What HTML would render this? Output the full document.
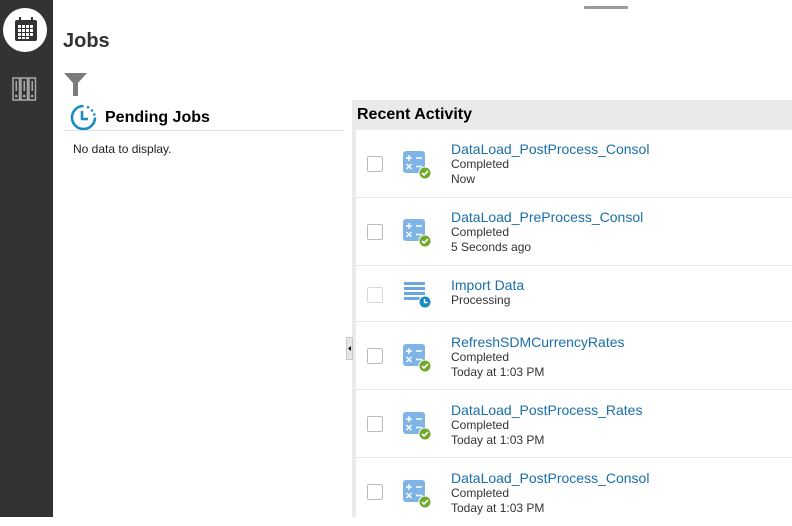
<!DOCTYPE html>
<html><head><meta charset="utf-8"><style>
*{margin:0;padding:0;box-sizing:border-box}
body{width:792px;height:517px;overflow:hidden;background:#fff;font-family:"Liberation Sans",sans-serif;position:relative}
.side{position:absolute;left:0;top:0;width:53px;height:517px;background:#333}
.circ{position:absolute;left:3px;top:8px;width:44px;height:44px;border-radius:50%;background:#fff}
.abs{position:absolute}
h1{position:absolute;left:63px;top:30px;font-size:20px;font-weight:bold;color:#333}
.pj{position:absolute;left:105px;top:109px;font-size:16px;font-weight:bold;color:#000}
.pline{position:absolute;left:63px;top:130px;width:281px;height:1px;background:#dde1e4}
.nd{position:absolute;left:73px;top:142px;font-size:12px;color:#222}
.panel{position:absolute;left:352px;top:100px;width:440px;height:417px;background:#e8eaeb}
.ph{position:absolute;left:357px;top:106px;font-size:16px;font-weight:bold;color:#000}
.list{position:absolute;left:356px;top:130px;width:436px;height:387px;background:#fff}
.row{position:absolute;left:0;width:436px;border-bottom:1px solid #e5e7e9}
.cb{position:absolute;left:11px;width:16px;height:16px;border:1px solid #b8bcc0;border-radius:2px;background:#fff}
.t{position:absolute;left:95px;font-size:14px;color:#1a6fa8}
.s{position:absolute;left:95px;font-size:12px;color:#333;line-height:15px}
.ic{position:absolute;left:47px}
.handle{position:absolute;left:346px;top:337px;width:7px;height:23px;background:#e6e6e6;border:1px solid #c8c8c8}
</style></head><body>
<div class="side"></div>
<div class="circ"></div>
<svg class="abs" style="left:14px;top:17px" width="24" height="25" viewBox="0 0 24 25">
<rect x="1" y="3" width="22" height="21" rx="2" fill="#333"/>
<rect x="5" y="0" width="2" height="5" fill="#333"/><rect x="17" y="0" width="2" height="5" fill="#333"/>
<g fill="#fff">
<rect x="4" y="8" width="3" height="3"/><rect x="8" y="8" width="3" height="3"/><rect x="12" y="8" width="3" height="3"/><rect x="16" y="8" width="3" height="3"/>
<rect x="4" y="12" width="3" height="3"/><rect x="8" y="12" width="3" height="3"/><rect x="12" y="12" width="3" height="3"/><rect x="16" y="12" width="3" height="3"/>
<rect x="4" y="16" width="3" height="3"/><rect x="8" y="16" width="3" height="3"/><rect x="12" y="16" width="3" height="3"/><rect x="16" y="16" width="3" height="3"/>
<rect x="4" y="20" width="3" height="2"/><rect x="8" y="20" width="3" height="2"/><rect x="12" y="20" width="3" height="2"/></g>
</svg>
<svg class="abs" style="left:12px;top:77px" width="25" height="24" viewBox="0 0 25 24">
<g fill="none" stroke="#aaa" stroke-width="1.5">
<rect x="1" y="1" width="6.5" height="22"/><rect x="9" y="1" width="6.5" height="22"/><rect x="17" y="1" width="6.5" height="22"/></g>
<g fill="#aaa"><rect x="3.5" y="4" width="1.5" height="10"/><rect x="11.5" y="4" width="1.5" height="10"/><rect x="19.5" y="4" width="1.5" height="10"/>
<circle cx="4.2" cy="19" r="1.3"/><circle cx="12.2" cy="19" r="1.3"/><circle cx="20.2" cy="19" r="1.3"/></g>
</svg>
<div class="abs" style="left:584px;top:6px;width:44px;height:3px;background:#999;border-radius:1px"></div>
<h1>Jobs</h1>
<svg class="abs" style="left:64px;top:73px" width="23" height="23" viewBox="0 0 23 23"><path d="M0 0H23L14 10V23H9V10Z" fill="#7b7b7b"/></svg>
<svg class="abs" style="left:70px;top:104px" width="27" height="27" viewBox="0 0 27 27">
<path d="M13.5 2A11.5 11.5 0 1 0 25 13.5" fill="none" stroke="#1a8bc0" stroke-width="2.6"/>
<path d="M12 7V15H18" fill="none" stroke="#1a8bc0" stroke-width="2.6"/>
<circle cx="18" cy="3.3" r="1.3" fill="#1a8bc0"/><circle cx="22" cy="6.5" r="1.3" fill="#1a8bc0"/><circle cx="24.3" cy="10.5" r="1.3" fill="#1a8bc0"/>
</svg>
<div class="pj">Pending Jobs</div>
<div class="pline"></div>
<div class="nd">No data to display.</div>
<div class="panel"></div>
<div class="ph">Recent Activity</div>
<div class="list">
<div class="row" style="top:0;height:68px"><div class="cb" style="top:26px"></div>
<svg class="ic" style="top:21px" width="30" height="30" viewBox="0 0 30 30"><rect x="0" y="0" width="22" height="22" rx="3" fill="#7fb5e6"/><path d="M3 7h6M6 4v6M13 7h6M3.5 13l5 5M8.5 13l-5 5M13 15.5h6" stroke="#fff" stroke-width="1.4"/><circle cx="22" cy="22" r="6.5" fill="#fff"/><circle cx="22" cy="22" r="5.5" fill="#6fa92a"/><path d="M19 22l2 2 4-4" stroke="#fff" stroke-width="1.6" fill="none"/></svg>
<div class="t" style="top:11px">DataLoad_PostProcess_Consol</div><div class="s" style="top:27px">Completed<br>Now</div></div>
<div class="row" style="top:68px;height:68px"><div class="cb" style="top:26px"></div>
<svg class="ic" style="top:21px" width="30" height="30" viewBox="0 0 30 30"><rect x="0" y="0" width="22" height="22" rx="3" fill="#7fb5e6"/><path d="M3 7h6M6 4v6M13 7h6M3.5 13l5 5M8.5 13l-5 5M13 15.5h6" stroke="#fff" stroke-width="1.4"/><circle cx="22" cy="22" r="6.5" fill="#fff"/><circle cx="22" cy="22" r="5.5" fill="#6fa92a"/><path d="M19 22l2 2 4-4" stroke="#fff" stroke-width="1.6" fill="none"/></svg>
<div class="t" style="top:11px">DataLoad_PreProcess_Consol</div><div class="s" style="top:27px">Completed<br>5 Seconds ago</div></div>
<div class="row" style="top:136px;height:56px"><div class="cb" style="top:21px;border-color:#d6d9dc"></div>
<svg class="ic" style="top:15px" width="30" height="30" viewBox="0 0 30 30"><g fill="#6ba7dc"><rect x="1" y="1" width="21" height="3"/><rect x="1" y="6" width="21" height="3"/><rect x="1" y="11" width="21" height="3"/><rect x="1" y="16" width="21" height="3"/></g><circle cx="22" cy="21" r="6.5" fill="#fff"/><circle cx="22" cy="21" r="5.5" fill="#1a8bc0"/><path d="M21.5 18v3.5h3" stroke="#fff" stroke-width="1.4" fill="none"/></svg>
<div class="t" style="top:11px">Import Data</div><div class="s" style="top:27px">Processing</div></div>
<div class="row" style="top:192px;height:68px"><div class="cb" style="top:26px"></div>
<svg class="ic" style="top:22px" width="30" height="30" viewBox="0 0 30 30"><rect x="0" y="0" width="22" height="22" rx="3" fill="#7fb5e6"/><path d="M3 7h6M6 4v6M13 7h6M3.5 13l5 5M8.5 13l-5 5M13 15.5h6" stroke="#fff" stroke-width="1.4"/><circle cx="22" cy="22" r="6.5" fill="#fff"/><circle cx="22" cy="22" r="5.5" fill="#6fa92a"/><path d="M19 22l2 2 4-4" stroke="#fff" stroke-width="1.6" fill="none"/></svg>
<div class="t" style="top:12px">RefreshSDMCurrencyRates</div><div class="s" style="top:28px">Completed<br>Today at 1:03 PM</div></div>
<div class="row" style="top:260px;height:68px"><div class="cb" style="top:26px"></div>
<svg class="ic" style="top:22px" width="30" height="30" viewBox="0 0 30 30"><rect x="0" y="0" width="22" height="22" rx="3" fill="#7fb5e6"/><path d="M3 7h6M6 4v6M13 7h6M3.5 13l5 5M8.5 13l-5 5M13 15.5h6" stroke="#fff" stroke-width="1.4"/><circle cx="22" cy="22" r="6.5" fill="#fff"/><circle cx="22" cy="22" r="5.5" fill="#6fa92a"/><path d="M19 22l2 2 4-4" stroke="#fff" stroke-width="1.6" fill="none"/></svg>
<div class="t" style="top:12px">DataLoad_PostProcess_Rates</div><div class="s" style="top:28px">Completed<br>Today at 1:03 PM</div></div>
<div class="row" style="top:328px;height:68px;border:none"><div class="cb" style="top:26px"></div>
<svg class="ic" style="top:22px" width="30" height="30" viewBox="0 0 30 30"><rect x="0" y="0" width="22" height="22" rx="3" fill="#7fb5e6"/><path d="M3 7h6M6 4v6M13 7h6M3.5 13l5 5M8.5 13l-5 5M13 15.5h6" stroke="#fff" stroke-width="1.4"/><circle cx="22" cy="22" r="6.5" fill="#fff"/><circle cx="22" cy="22" r="5.5" fill="#6fa92a"/><path d="M19 22l2 2 4-4" stroke="#fff" stroke-width="1.6" fill="none"/></svg>
<div class="t" style="top:12px">DataLoad_PostProcess_Consol</div><div class="s" style="top:28px">Completed<br>Today at 1:03 PM</div></div>
</div>
<div class="handle"><svg width="5" height="21" viewBox="0 0 5 21" style="position:absolute;left:0;top:0"><path d="M1 10.5L4 8V13Z" fill="#000"/></svg></div>
</body></html>
